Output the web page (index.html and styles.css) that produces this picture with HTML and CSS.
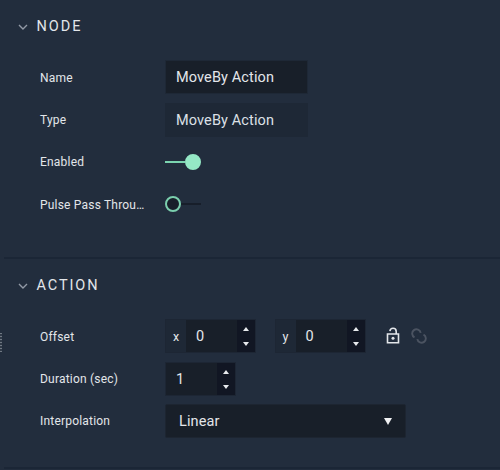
FILE: index.html
```html
<!DOCTYPE html>
<html lang="en">
<head>
<meta charset="utf-8">
<title>Node properties</title>
<link rel="stylesheet" href="styles.css">
</head>
<body>
<main class="panel">
  <section class="section">
    <h2 class="heading"><svg class="chevron" width="10" height="7" viewBox="0 0 10 7"><path d="M1 1l4 4 4-4"/></svg><span>NODE</span></h2>
    <div class="rows">
      <div class="row"><label class="label">Name</label><div class="field">MoveBy Action</div></div>
      <div class="row"><label class="label">Type</label><div class="field readonly">MoveBy Action</div></div>
      <div class="row"><label class="label">Enabled</label><div class="toggle on"><i class="track"></i><i class="knob"></i></div></div>
      <div class="row"><label class="label">Pulse Pass Throu…</label><div class="toggle"><i class="knob"></i><i class="track"></i></div></div>
    </div>
  </section>
  <section class="section action">
    <h2 class="heading"><svg class="chevron" width="10" height="7" viewBox="0 0 10 7"><path d="M1 1l4 4 4-4"/></svg><span>ACTION</span></h2>
    <div class="rows">
      <div class="row">
        <label class="label">Offset</label>
        <div class="number"><span class="axis">x</span><span class="value">0</span><span class="stepper"><i class="up"></i><i class="down"></i></span></div>
        <div class="number second"><span class="axis">y</span><span class="value">0</span><span class="stepper"><i class="up"></i><i class="down"></i></span></div>
        <svg class="lock" width="14" height="18" viewBox="0 0 14 18"><path d="M1.500 7h11v8.700h-11zM3.900 4.200C4.100 2.300 5.300 1.300 7 1.300c2 0 3.200 1.300 3.200 3.100V7"/><circle cx="7" cy="11.300" r="1.500"/></svg>
        <svg class="link" width="16" height="16" viewBox="0 0 16 16"><path d="M3.500 9.400A4.300 4.300 0 1 1 9.700 4.800M12.500 6.600A4.300 4.300 0 1 1 6.300 11.200"/></svg>
      </div>
      <div class="row"><label class="label">Duration (sec)</label><div class="number plain"><span class="value">1</span><span class="stepper"><i class="up"></i><i class="down"></i></span></div></div>
      <div class="row"><label class="label">Interpolation</label><div class="select"><span>Linear</span><i class="arrow"></i></div></div>
    </div>
  </section>
  <div class="grip"></div>
</main>
</body>
</html>
```
FILE: styles.css
```css
* { box-sizing: border-box; }
body { margin: 0; background: #222d3d; color: #e3e6ea; font-family: Roboto, "Liberation Sans", sans-serif; }
.panel { position: relative; height: 470px; overflow: hidden; }
.section { height: 257px; padding-top: 17px; }
.action { height: 212px; margin-left: 4px; border-top: 2px solid #1b2636; border-bottom: 2px solid #1b2636; }
.heading { display: flex; align-items: center; gap: 9px; height: 20px; margin: 0; padding-left: 17.500px; font-size: 14.500px; font-weight: 400; letter-spacing: 2px; line-height: 20px; }
.action .heading { padding-left: 13.500px; letter-spacing: 1.9px; }
.chevron { fill: none; stroke: #929aa6; stroke-width: 1.4; }
.rows { padding: 19px 0 0 40px; }
.action .rows { padding-left: 36px; }
.row { display: flex; align-items: center; height: 42.400px; }
.label { flex: none; width: 107px; margin-right: 18px; padding-top: 1px; white-space: nowrap; font-size: 12px; letter-spacing: .2px; line-height: 18px; }
.field { width: 143px; height: 34px; padding: 1px 0 0 10px; border: 1px solid #1e2836; background: #181f29; font-size: 14.500px; letter-spacing: .12px; line-height: 32px; }
.readonly { background: #1e2836; color: #dce0e6; }
.toggle { display: flex; align-items: center; width: 36px; }
.track { flex: 1; height: 2px; background: #171e2a; }
.knob { width: 16px; height: 16px; border: 2px solid #7bcfae; border-radius: 50%; background: #181f2a; }
.on .track { background: #7bd4b0; }
.on .knob { border-color: #95e8c6; background: #95e8c6; }
.number { display: flex; width: 91px; height: 34px; border: 1px solid #1d2634; font-size: 14.500px; line-height: 34px; }
.second { margin-left: 18.500px; }
.plain { width: 71px; }
.axis { width: 20px; background: #1e2836; text-align: center; font-size: 12.500px; line-height: 34px; }
.value { flex: 1; padding-left: 10px; background: #181f29; }
.number > span { height: 32px; }
.stepper { display: flex; flex-direction: column; align-items: center; justify-content: space-between; width: 18px; padding: 7px 0 6px; background: #111623; }
.up, .down { border: solid transparent; border-width: 0 3.500px; }
.up { border-bottom: 4px solid #e8eaed; }
.down { border-top: 4px solid #e8eaed; }
.lock { margin-left: 20px; fill: none; stroke: #e3e6ea; stroke-width: 1.6; }
.lock circle { fill: #e3e6ea; stroke: none; }
.link { margin-left: 11.500px; fill: none; stroke: #4b5361; stroke-width: 1.9; }
.select { display: flex; align-items: center; justify-content: space-between; width: 241px; height: 34px; padding: 1px 13px 0 13px; border: 1px solid #1d2531; border-radius: 2px; background: #181f29; font-size: 14.500px; letter-spacing: .1px; }
.arrow { border: solid transparent; border-width: 0 4.500px; border-top: 7px solid #f0f1f3; }
.grip { position: absolute; left: 0; top: 333px; width: 2px; height: 19px; background: repeating-linear-gradient(#707984 0 1px, #303a48 1px 3px); }
```
